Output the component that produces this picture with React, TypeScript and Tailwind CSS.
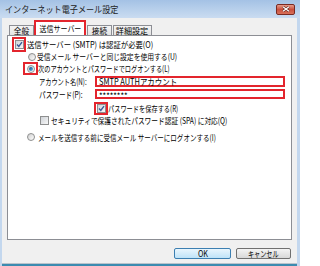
import React from "react";

const Check = ({ checked }: { checked?: boolean }) => (
  <span className="w-[9px] h-[9px] shrink-0 border border-[#8e8f8f] bg-gradient-to-br from-[#cfd3d8] to-[#f8f8f8] flex items-center justify-center">
    {checked && (
      <svg width="7" height="7" viewBox="0 0 7 7">
        <path d="M1 3.6 L2.8 5.4 L6 1.2" fill="none" stroke="#3b5a97" strokeWidth="1.4" />
      </svg>
    )}
  </span>
);

const Radio = ({ on }: { on?: boolean }) => (
  <span className="w-[8px] h-[8px] shrink-0 rounded-full border border-[#8e8f8f] bg-gradient-to-br from-[#d0d0d0] to-white flex items-center justify-center">
    {on && <span className="w-[4px] h-[4px] rounded-full bg-gradient-to-br from-[#0f4a86] to-[#5fc1ec]" />}
  </span>
);

const T = ({ c, children }: { c: string; children: React.ReactNode }) => (
  <span className={"inline-block whitespace-nowrap " + c}>{children}</span>
);

export default function App() {
  return (
    <div className="w-[300px] h-[266px] flex flex-col bg-[#c3d7ee] font-['Noto_Sans_CJK_JP',sans-serif] text-black overflow-hidden">
      {/* title bar */}
      <div className="h-[18px] shrink-0 flex items-center pl-[5px] pr-[5px] bg-gradient-to-b from-[#a4c2e5] to-[#cadcf1]">
        <span className="text-[9px] leading-none text-[#1e1e1e]">
          <T c="origin-left scale-x-[0.9]">インターネット電子メール設定</T>
        </span>
        <div className="ml-auto w-[19px] h-[11px] rounded-[2px] border border-[#7a2a22] bg-gradient-to-b from-[#e59a8a] via-[#c9503e] to-[#d8705a] flex items-center justify-center">
          <svg width="8" height="6" viewBox="0 0 8 6">
            <path d="M1 0.8 L7 5.2 M7 0.8 L1 5.2" stroke="#5a2019" strokeWidth="2.4" />
            <path d="M1 0.8 L7 5.2 M7 0.8 L1 5.2" stroke="#ffffff" strokeWidth="1.3" />
          </svg>
        </div>
      </div>

      {/* client */}
      <div className="flex-1 ml-[2px] mr-[3px] bg-[#f0f0f0] flex flex-col">
        {/* tabs */}
        <div className="h-[17px] shrink-0 flex items-end pl-[7px] text-[8.5px] leading-none">
          <div className="w-[25px] h-[10px] border border-b-0 border-[#8c8e94] bg-gradient-to-b from-[#f4f4f4] to-[#e3e3e3] flex items-center justify-center">
            <T c="scale-x-[0.9]">全般</T>
          </div>
          <div className="w-[52px] h-[15px] border-2 border-b-0 border-[#e3252d] bg-white flex items-center justify-center">
            <T c="scale-x-[0.82]">送信サーバー</T>
          </div>
          <div className="ml-[1px] w-[25px] h-[10px] border border-b-0 border-[#8c8e94] bg-gradient-to-b from-[#f4f4f4] to-[#e3e3e3] flex items-center justify-center">
            <T c="scale-x-[0.9]">接続</T>
          </div>
          <div className="ml-[1px] w-[39px] h-[10px] border border-b-0 border-[#8c8e94] bg-gradient-to-b from-[#f4f4f4] to-[#e3e3e3] flex items-center justify-center">
            <T c="scale-x-[0.95]">詳細設定</T>
          </div>
        </div>

        {/* panel */}
        <div className="mx-[5px] h-[205px] shrink-0 border border-[#8c8e94] bg-white flex flex-col text-[8.5px] leading-none whitespace-nowrap">
          {/* row 1 */}
          <div className="mt-[1px] h-[15px] flex items-center">
            <div className="ml-[4px] w-[14px] h-[15px] shrink-0 border-2 border-[#e3252d] flex items-center justify-center">
              <Check checked />
            </div>
            <span className="ml-[1px]">
              <T c="origin-left scale-x-[0.865]">送信サーバー (SMTP) は認証が必要(O)</T>
            </span>
          </div>
          {/* row 2 */}
          <div className="h-[9px] flex items-center">
            <div className="ml-[20px]"><Radio /></div>
            <span className="ml-[1px]">
              <T c="origin-left scale-x-[0.8]">受信メール サーバーと同じ設定を使用する(U)</T>
            </span>
          </div>
          {/* row 3 */}
          <div className="mt-[1px] h-[13px] flex items-center">
            <div className="ml-[15px] w-[15px] h-[13px] shrink-0 border-2 border-[#e3252d] flex items-center justify-center">
              <Radio on />
            </div>
            <span className="ml-[0px]">
              <T c="origin-left scale-x-[0.73]">次のアカウントとパスワードでログオンする(L)</T>
            </span>
          </div>
          {/* row 4 */}
          <div className="mt-[1px] h-[11px] flex items-center">
            <span className="ml-[31px] w-[56px] shrink-0">
              <T c="origin-left scale-x-[0.73]">アカウント名(N):</T>
            </span>
            <div className="w-[190px] h-[11px] shrink-0 border-2 border-[#e3252d] flex items-center pl-[2px]">
              <T c="origin-left scale-x-[0.875]">SMTP AUTHアカウント</T>
            </div>
          </div>
          {/* row 5 */}
          <div className="mt-[2px] h-[10px] flex items-center">
            <span className="ml-[31px] w-[56px] shrink-0">
              <T c="origin-left scale-x-[0.78]">パスワード(P):</T>
            </span>
            <div className="w-[190px] h-[10px] shrink-0 border-2 border-[#e3252d] flex items-center pl-[2px] pt-[2px]">
              <T c="origin-left scale-x-[0.9]">********</T>
            </div>
          </div>
          {/* row 6 */}
          <div className="mt-[3px] h-[13px] flex items-center">
            <div className="ml-[86px] w-[14px] h-[13px] shrink-0 border-2 border-[#e3252d] flex items-center justify-center">
              <Check checked />
            </div>
            <span className="ml-[0px]">
              <T c="origin-left scale-x-[0.73]">パスワードを保存する(R)</T>
            </span>
          </div>
          {/* row 7 */}
          <div className="h-[10px] flex items-center">
            <div className="ml-[32px]"><Check /></div>
            <span className="ml-[2px]">
              <T c="origin-left scale-x-[0.79]">セキュリティで保護されたパスワード認証 (SPA) に対応(Q)</T>
            </span>
          </div>
          {/* row 8 */}
          <div className="mt-[7px] h-[10px] flex items-center">
            <div className="ml-[19px]"><Radio /></div>
            <span className="ml-[3px]">
              <T c="origin-left scale-x-[0.77]">メールを送信する前に受信メール サーバーにログオンする(I)</T>
            </span>
          </div>
        </div>

        {/* buttons */}
        <div className="mt-[8px] flex justify-end gap-[5px] pr-[6px] text-[8.5px] leading-none">
          <div className="w-[57px] h-[11px] rounded-[2px] border border-[#3c7fb1] bg-gradient-to-b from-[#eaf6fd] to-[#bfe3f8] flex items-center justify-center">
            <T c="scale-x-[0.85]">OK</T>
          </div>
          <div className="w-[55px] h-[11px] rounded-[2px] border border-[#707070] bg-gradient-to-b from-[#f4f4f4] to-[#d8d8d8] flex items-center justify-center">
            <T c="scale-x-[0.72]">キャンセル</T>
          </div>
        </div>
        <div className="flex-1" />
      </div>
      <div className="h-[3px] shrink-0 ml-[2px] mr-[3px] border-t border-[#b9c3cc] bg-[#3b8bb0]" />
    </div>
  );
}
